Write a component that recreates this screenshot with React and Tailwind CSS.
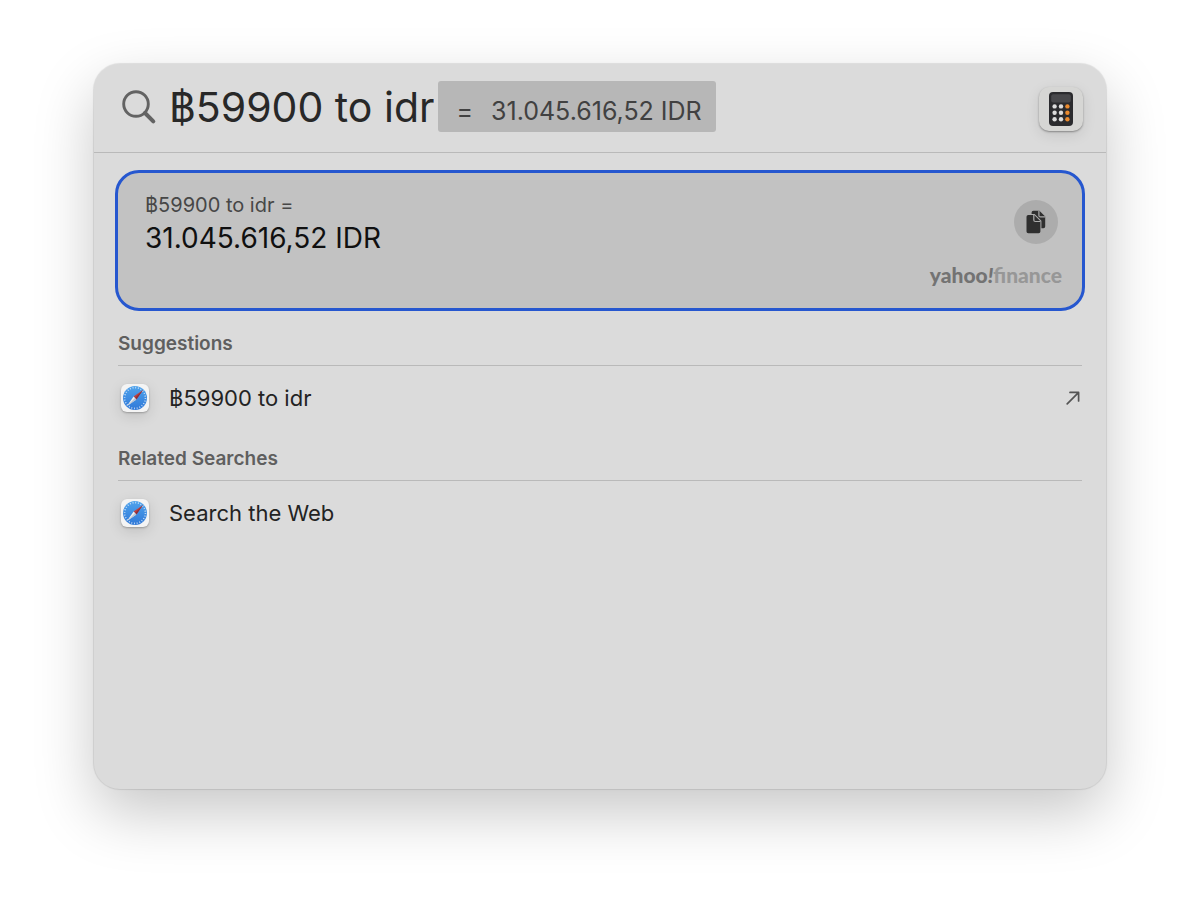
import { useState } from "react";

const answer = "31.045.616,52 IDR";

function SearchIcon() {
  return (
    <svg viewBox="0 0 36 36" className="h-9 w-9 shrink-0" fill="none" stroke="#636363" strokeLinecap="round" aria-hidden="true">
      <circle cx="15" cy="15" r="12.3" strokeWidth="2.9" />
      <path d="M24 24 32.3 32.3" strokeWidth="4" />
    </svg>
  );
}

function CalculatorIcon() {
  const keys = [15.4, 21.8, 28.2];
  return (
    <svg viewBox="0 0 26 36" className="h-9 w-[26px]" aria-hidden="true">
      <rect x="1" y="1" width="24" height="34" rx="4" fill="#2b2b2e" />
      <rect x="3.2" y="3.2" width="19.6" height="8.4" rx="2" fill="#48484b" />
      {keys.map((y) => (
        <g key={y}>
          <circle cx="6.6" cy={y} r="2.2" fill="#dcdcdc" />
          <circle cx="13" cy={y} r="2.2" fill="#dcdcdc" />
          <circle cx="19.4" cy={y} r="2.2" fill="#ea8a2e" />
        </g>
      ))}
    </svg>
  );
}

function CopyIcon() {
  return (
    <svg viewBox="0 0 20 26" className="h-[26px] w-5" aria-hidden="true">
      <path d="M7.4 1.8h6l5.8 5.8v9.8a1.8 1.8 0 0 1-1.8 1.8H7.4a1.8 1.8 0 0 1-1.8-1.8V3.6a1.8 1.8 0 0 1 1.8-1.8Z" fill="#2f2f2f" />
      <path d="M12.900 1.800v4.600c0 .9.600 1.500 1.500 1.500h4.800" fill="none" stroke="#acacac" strokeWidth="1.2" />
      <path
        d="M2.300 6h5.900l6.200 6.200v10.200a1.800 1.800 0 0 1-1.800 1.800H2.300a1.800 1.800 0 0 1-1.800-1.800V7.800A1.800 1.800 0 0 1 2.300 6Z"
        fill="#2f2f2f"
        stroke="#acacac"
        strokeWidth="2"
        paintOrder="stroke"
      />
      <path d="M7.800 6v5c0 .9.600 1.500 1.500 1.500h5.100" fill="none" stroke="#acacac" strokeWidth="1.2" />
    </svg>
  );
}

function SafariIcon() {
  return (
    <span className="flex h-7 w-7 shrink-0 items-center justify-center rounded-md bg-[#f4f4f4] shadow-[0_1px_2px_rgba(0,0,0,0.25),0_4px_14px_rgba(0,0,0,0.12)]">
      <svg viewBox="0 0 24 24" className="h-6 w-6" aria-hidden="true">
        <defs>
          <linearGradient id="dial" x1="0" y1="0" x2="0" y2="1">
            <stop offset="0" stopColor="#4fa3ec" />
            <stop offset="1" stopColor="#2f78d8" />
          </linearGradient>
        </defs>
        <circle cx="12" cy="12" r="12" fill="url(#dial)" />
        <circle cx="12" cy="12" r="10.4" fill="none" stroke="#fff" strokeOpacity="0.7" strokeWidth="1.6" strokeDasharray="0.9 1.82" />
        <path d="M20 4 10.6 10.6 13.4 13.4Z" fill="#c0403e" />
        <path d="M4 20 10.6 10.6 13.4 13.4Z" fill="#f2f2f2" />
        <path d="M20 4 12 12 13.4 13.4Z" fill="#8b2f3a" />
        <path d="M4 20 12 12 13.4 13.4Z" fill="#b9c4d2" />
      </svg>
    </span>
  );
}

function ArrowIcon() {
  return (
    <svg viewBox="0 0 14 14" className="h-3.5 w-3.5" fill="none" stroke="#555" strokeWidth="1.7" strokeLinecap="round" strokeLinejoin="round" aria-hidden="true">
      <path d="M1.2 12.8 12.4 1.6M4 1.4h8.6v8.6" />
    </svg>
  );
}

function Section({ title, label, external }) {
  return (
    <section className="mb-[25px] px-6">
      <h2 className="border-b border-[#b9b9b9] pb-[7px] text-[19px] leading-7 font-semibold text-[#5f5f5f]">{title}</h2>
      <a href="#" className="flex h-[54px] items-end justify-between">
        <span className="flex h-11 items-center gap-5 pl-[3px]">
          <SafariIcon />
          <span className="text-[22px] leading-7 text-[#232323]">{label}</span>
        </span>
        {external && (
          <span className="flex h-11 items-center pr-0.5">
            <ArrowIcon />
          </span>
        )}
      </a>
    </section>
  );
}

export default function App() {
  const [query, setQuery] = useState("฿59900 to idr");

  return (
    <main className="min-h-screen bg-white px-[94px] pt-16 pb-[124px] font-['Inter','Noto_Sans',sans-serif]">
      <div className="min-h-[725px] rounded-[26px] bg-[#dbdbdb] shadow-[0_0_1px_1px_rgba(0,0,0,0.1),0_24px_60px_rgba(0,0,0,0.22)]">
        <header className="flex h-[89px] items-center border-b border-[#b9b9b9] pr-[23px] pb-[3px] pl-[27px]">
          <SearchIcon />
          <input
            type="text"
            aria-label="Search"
            value={query}
            onChange={(event) => setQuery(event.target.value)}
            className="ml-3 field-sizing-content bg-transparent text-[41px] leading-[52px] text-[#282828] outline-none"
          />
          <output className="ml-1 flex h-[51px] items-center gap-[18px] rounded-[3px] bg-[#b7b7b7] pt-2 pr-[14px] pl-[18px] text-[25px] leading-8 whitespace-nowrap text-[#414141]">
            <span>=</span>
            <span>{answer}</span>
          </output>
          <span className="mt-1 ml-auto flex h-11 w-11 items-center justify-center rounded-[10px] bg-[#d6d6d4] shadow-[0_1px_2px_rgba(0,0,0,0.35),0_4px_14px_rgba(0,0,0,0.1)]">
            <CalculatorIcon />
          </span>
        </header>

        <div className="mx-[21px] mt-[17px] mb-[19px] flex h-[141px] justify-between rounded-[24px] border-3 border-[#2657cf] bg-[#c2c2c2] pt-[18px] pr-5 pl-[27px]">
          <div>
            <p className="text-xl leading-7 text-[#474747]">{query} =</p>
            <p className="text-[28px] leading-[38px] text-[#101010]">{answer}</p>
          </div>
          <div className="flex flex-col items-end pt-[9px]">
            <button type="button" aria-label="Copy" className="mr-1 flex h-11 w-11 items-center justify-center rounded-full bg-[#acacac]">
              <CopyIcon />
            </button>
            <p className="mt-[19px] font-['Lato',sans-serif] text-[21px] leading-6 font-black text-[#979797]">
              <span className="text-[#737373]">
                yahoo<i>!</i>
              </span>
              finance
            </p>
          </div>
        </div>

        <Section title="Suggestions" label={query} external />
        <Section title="Related Searches" label="Search the Web" />
      </div>
    </main>
  );
}
